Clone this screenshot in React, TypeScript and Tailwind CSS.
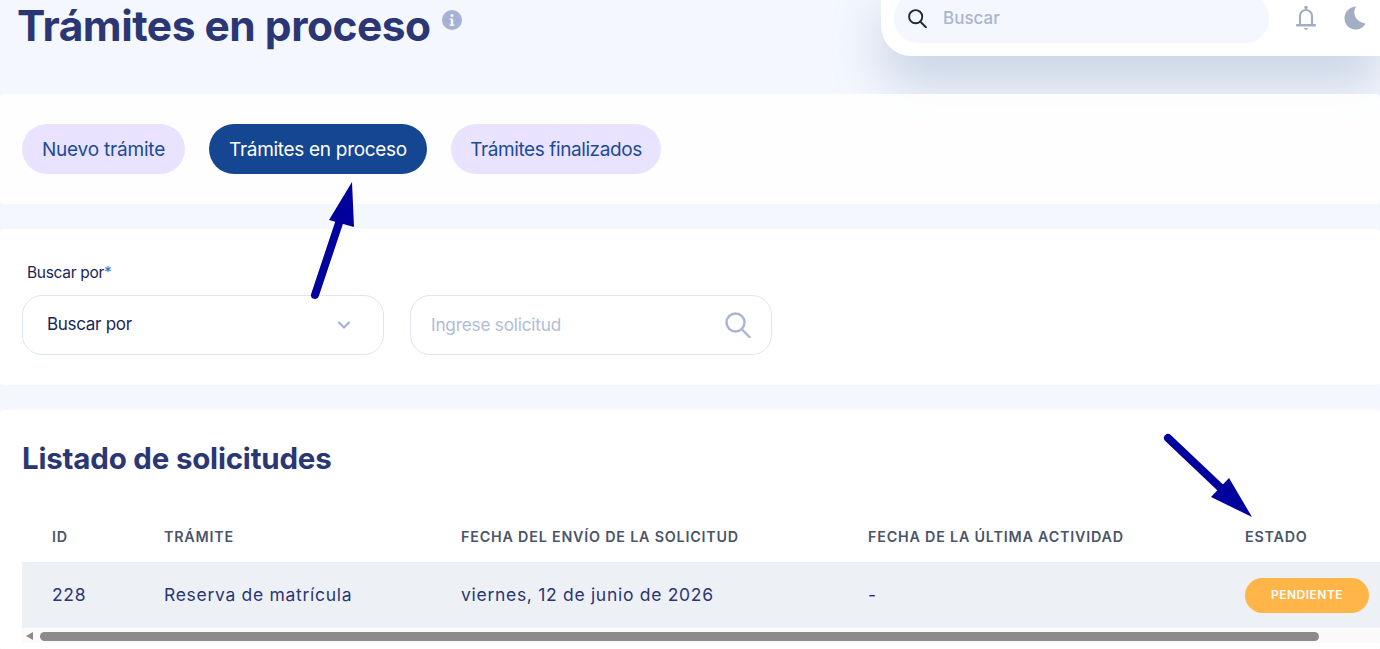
import { ChevronDown } from "lucide-react";

const tabs = [
  { label: "Nuevo trámite", active: false, size: "w-[163px] tracking-[-0.2px]" },
  { label: "Trámites en proceso", active: true, size: "w-[218px] tracking-[-0.3px]" },
  { label: "Trámites finalizados", active: false, size: "w-[210px] tracking-[-0.4px]" },
];

const rowGrid = "grid grid-cols-[112px_297px_407px_377px_1fr] pl-[30px]";

const InfoIcon = () => (
  <svg viewBox="0 0 20 20" className="h-5 w-5 shrink-0">
    <circle cx="10" cy="10" r="10" fill="#a6b1d6" />
    <circle cx="10" cy="5.4" r="1.5" fill="#f4f7fe" />
    <path d="M7.8 8.4h3.4v6h1.2v1.6H7.6v-1.6h1.2V10H7.8z" fill="#f4f7fe" />
  </svg>
);

const BellIcon = () => (
  <svg viewBox="0 0 20 26" className="h-[26px] w-5" fill="none">
    <circle cx="10" cy="2.6" r="1.8" fill="#a3aec4" />
    <path d="M4 19V11a6 6 0 0 1 12 0v8" stroke="#a3aec4" strokeWidth="2.2" />
    <path d="M1 20.2h18" stroke="#a3aec4" strokeWidth="2.4" strokeLinecap="round" />
    <path d="M7.4 23h5.2l-2.6 2.2z" fill="#a3aec4" />
  </svg>
);

const MoonIcon = () => (
  <svg viewBox="0 0 22 24" className="h-6 w-[22px]">
    <path d="M12.5 0.5C8.5 4.5 9.5 15.5 21.5 17.5C19.5 21.5 15.5 23.5 11.5 23.5C5 23.5 0.5 18.5 0.5 12C0.5 6 5.5 0.5 12.5 0.5Z" fill="#a3aec4" />
  </svg>
);

const LensIcon = ({ className, width }: { className: string; width: number }) => (
  <svg viewBox="0 0 26 26" className={className} fill="none" stroke="currentColor" strokeWidth={width} strokeLinecap="round">
    <circle cx="10.5" cy="10.5" r="9" />
    <path d="M17 17.5L24.5 25" />
  </svg>
);

function Arrows() {
  return (
    <svg className="pointer-events-none absolute inset-0 z-30 h-[649px] w-[1380px]" viewBox="0 0 1380 649">
      <path d="M315 295L340 220" stroke="#00009c" strokeWidth="8" strokeLinecap="round" />
      <path d="M352 182L329 220L354 227Z" fill="#00009c" />
      <path d="M1168 438L1225 492" stroke="#00009c" strokeWidth="8" strokeLinecap="round" />
      <path d="M1252 517L1211 497L1229 478Z" fill="#00009c" />
    </svg>
  );
}

export default function App() {
  return (
    <div className="relative h-[649px] w-[1380px] overflow-hidden bg-[#f4f7fe] font-['Inter',sans-serif]">
      {/* Header */}
      <div className="flex h-[94px] items-start pl-[17px]">
        <h1 className="mt-[-1px] text-[42.5px] leading-[54px] font-bold tracking-[-0.5px] text-[#2b3674]">Trámites en proceso</h1>
        <div className="mt-[10px] ml-[11px]">
          <InfoIcon />
        </div>
      </div>

      {/* Search bar over the page */}
      <div className="absolute top-[-20px] right-0 z-10 flex h-[76px] w-[499px] items-center rounded-bl-[30px] bg-white pl-[13px] shadow-[0_30px_50px_rgba(112,144,176,0.32)]">
        <div className="mb-[13px] flex h-[50px] w-[375px] items-center self-end rounded-[24px] bg-[#f4f7fe] pl-[14px]">
          <LensIcon className="h-[19px] w-[19px] text-[#1f2937]" width={2.6} />
          <span className="ml-[16px] translate-y-px text-[17px] font-medium text-[#a9b5cb]">Buscar</span>
        </div>
        <div className="ml-[27px] flex items-center gap-[28px]">
          <BellIcon />
          <MoonIcon />
        </div>
      </div>

      {/* Tabs */}
      <section className="relative z-20 flex h-[110px] items-center gap-6 rounded-[4px] bg-white/90 pl-[22px]">
        {tabs.map((tab) => (
          <button
            key={tab.label}
            className={
              tab.active
                ? `flex h-[50px] items-center justify-center rounded-[25px] bg-[#144691] pt-[2px] text-[19px] text-white ${tab.size}`
                : `flex h-[50px] items-center justify-center rounded-[25px] bg-[#e9e3ff] pt-[2px] text-[19px] text-[#1b4b98] ${tab.size}`
            }
          >
            {tab.label}
          </button>
        ))}
      </section>

      {/* Filters */}
      <section className="relative z-20 mt-[25px] h-[156px] rounded-[4px] bg-white pt-[34px] pl-[22px]">
        <div className="ml-[5px] text-[15.5px] leading-5 tracking-[-0.3px] text-[#1b2559]">
          Buscar por<span className="text-[#3f6cbc]">*</span>
        </div>
        <div className="mt-[12px] flex gap-[26px]">
          <div className="flex h-[60px] w-[362px] items-center justify-between rounded-[20px] border border-[#e0e5f2] pr-[29px] pl-[24px]">
            <span className="text-[17px] tracking-[-0.3px] text-[#1b2559]">Buscar por</span>
            <ChevronDown className="h-5 w-5 text-[#a3aed0]" strokeWidth={2.6} />
          </div>
          <div className="flex h-[60px] w-[362px] items-center justify-between rounded-[20px] border border-[#e0e5f2] pr-[20px] pl-[20px]">
            <span className="text-[17.2px] tracking-[-0.2px] text-[#b0bbd9]">Ingrese solicitud</span>
            <LensIcon className="h-[26px] w-[26px] text-[#a9b5d6]" width={2.4} />
          </div>
        </div>
      </section>

      {/* List */}
      <section className="relative z-20 mt-[25px] h-[240px] rounded-[4px] bg-white pt-[30px] pl-[22px]">
        <h2 className="text-[29.5px] leading-9 font-bold tracking-[-0.2px] text-[#2b3674]">Listado de solicitudes</h2>
        <div className={`${rowGrid} mt-[51px] text-[14.3px] leading-5 font-semibold tracking-[0.8px] text-[#4a5568]`}>
          <div>ID</div>
          <div>TRÁMITE</div>
          <div>FECHA DEL ENVÍO DE LA SOLICITUD</div>
          <div>FECHA DE LA ÚLTIMA ACTIVIDAD</div>
          <div>ESTADO</div>
        </div>
        <div className={`${rowGrid} mt-[15px] h-[66px] items-center bg-[#edf1f6] text-[17.5px] tracking-[0.7px] text-[#2b3674]`}>
          <div>228</div>
          <div>Reserva de matrícula</div>
          <div>viernes, 12 de junio de 2026</div>
          <div>-</div>
          <div className="flex h-[35px] w-[124px] items-center justify-center rounded-[18px] bg-[#ffb547] text-[12px] font-semibold tracking-[0.5px] text-white">PENDIENTE</div>
        </div>
        {/* Scrollbar */}
        <div className="mt-[1px] flex h-[14px] items-center bg-[#fafafa]">
          <div className="ml-[4px] h-0 w-0 border-y-[4px] border-r-[7px] border-y-transparent border-r-[#8b8b8b]" />
          <div className="ml-[7px] h-[9px] w-[1279px] rounded-full bg-[#8b8b8b]" />
        </div>
      </section>

      <Arrows />
    </div>
  );
}
